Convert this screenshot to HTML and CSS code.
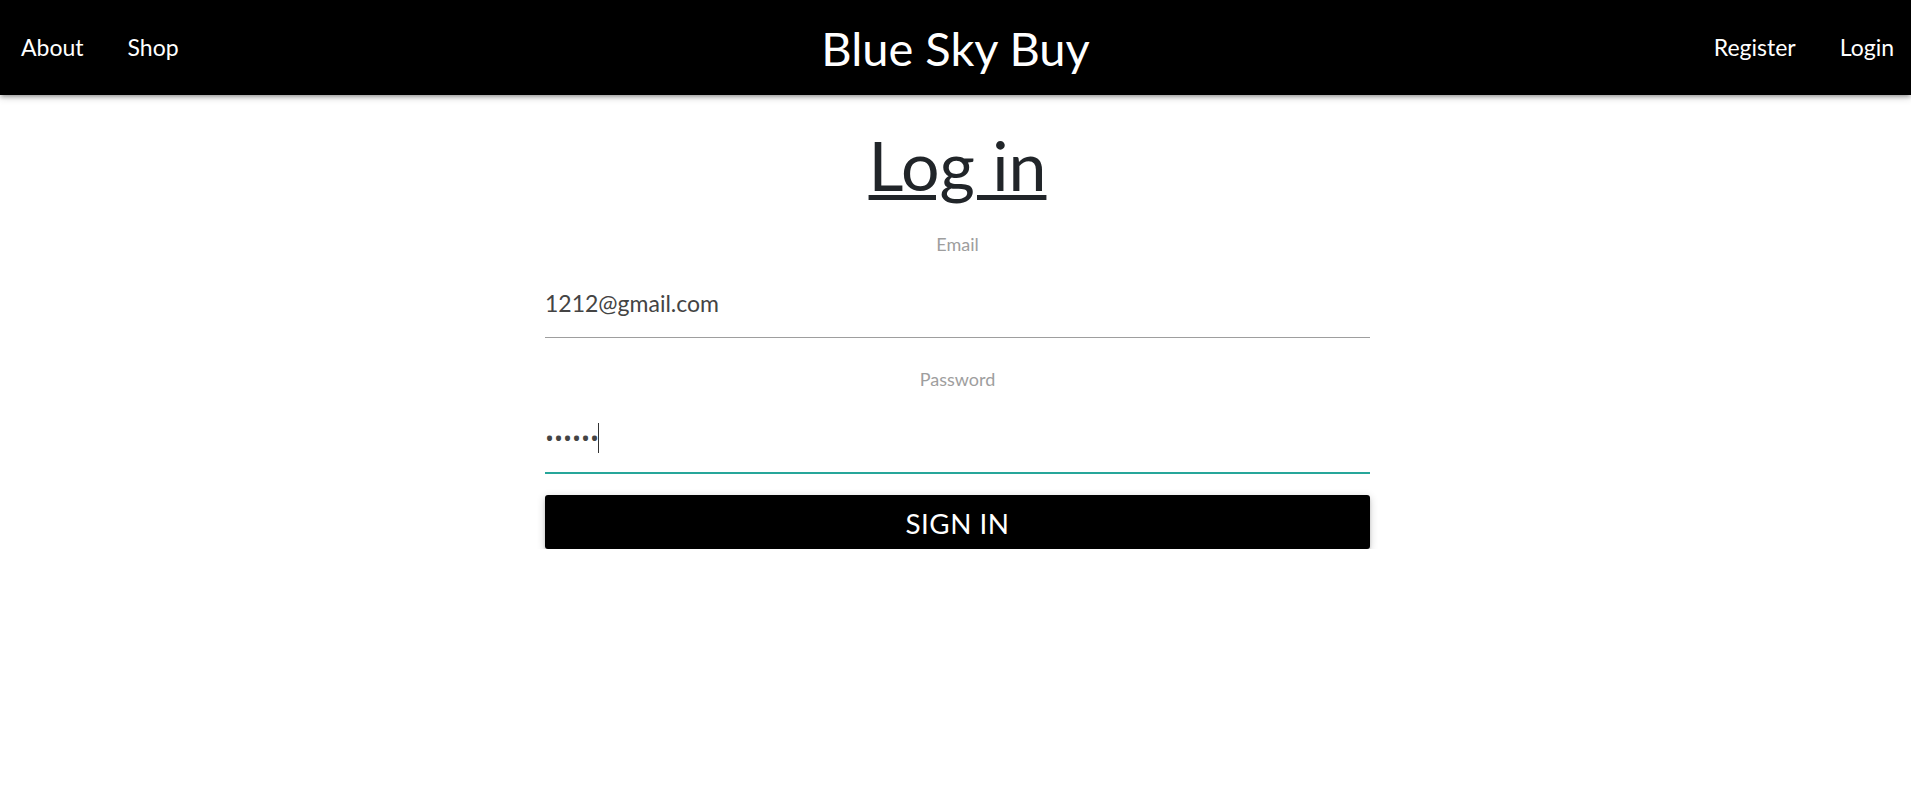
FILE: index.html
```html
<!DOCTYPE html>
<html lang="en">
<head>
<meta charset="utf-8">
<title>Blue Sky Buy - Log in</title>
<link rel="stylesheet" href="styles.css">
</head>
<body>
<nav class="topnav">
  <ul class="nav-links nav-left">
    <li><a href="#">About</a></li>
    <li><a href="#">Shop</a></li>
  </ul>
  <a class="brand" href="#">Blue Sky Buy</a>
  <ul class="nav-links nav-right">
    <li><a href="#">Register</a></li>
    <li><a href="#">Login</a></li>
  </ul>
</nav>
<main class="page">
  <h1 class="title"><a href="#">Log in</a></h1>
  <form class="login-form">
    <div class="field">
      <label class="field-label" for="email">Email</label>
      <input class="field-input" id="email" type="email" value="1212@gmail.com">
    </div>
    <div class="field field-second">
      <label class="field-label" for="password">Password</label>
      <div class="input-wrap">
        <input class="field-input field-password is-focused" id="password" type="password" value="123456">
        <span class="caret"></span>
      </div>
    </div>
    <button class="btn" type="button">Sign in</button>
  </form>
</main>
</body>
</html>
```
FILE: styles.css
```css
html, body {
  margin: 0;
  padding: 0;
  background: #fff;
}

body {
  font-family: Lato, "Open Sans", "Liberation Sans", sans-serif;
}

.topnav {
  display: grid;
  grid-template-columns: 1fr auto 1fr;
  align-items: center;
  height: 95px;
  background: #000;
  color: #fff;
  box-shadow: 0 3px 3px 0 rgba(0,0,0,0.14), 0 4px 2px -3px rgba(0,0,0,0.12), 0 2px 8px 0 rgba(0,0,0,0.2);
  position: relative;
  z-index: 2;
}

.nav-links {
  display: flex;
  list-style: none;
  margin: 0;
  padding: 0;
}

.nav-left {
  justify-self: start;
  margin-left: -1px;
}

.nav-right {
  justify-self: end;
  margin-right: -5px;
}

.nav-links a {
  display: block;
  padding: 0 22px;
  line-height: 95px;
  font-size: 23px;
  color: #fff;
  text-decoration: none;
}

.brand {
  font-size: 47px;
  line-height: 94px;
  color: #fff;
  text-decoration: none;
  white-space: nowrap;
}

.page {
  width: 829px;
  margin: 0 auto;
  padding-left: 4px;
  box-sizing: border-box;
}

.title {
  margin: 30px 0 0;
  text-align: center;
  font-size: 68px;
  font-weight: 400;
  line-height: 80px;
}

.title a {
  color: #212529;
  text-decoration: underline;
  text-decoration-thickness: 5px;
  text-underline-offset: 4px;
}

.login-form {
  display: flex;
  flex-direction: column;
  margin-top: 27px;
}

.field {
  display: flex;
  flex-direction: column;
}

.field-second {
  margin-top: 29px;
}

.field-label {
  display: block;
  text-align: center;
  font-size: 18px;
  line-height: 24px;
  color: #9e9e9e;
  margin-bottom: 12px;
}

.field-second .field-label {
  margin-bottom: 12px;
}

.input-wrap {
  position: relative;
}

.field-input {
  display: block;
  width: 100%;
  box-sizing: content-box;
  height: 69px;
  padding: 0;
  margin: 0;
  border: none;
  border-bottom: 1px solid #9e9e9e;
  outline: none;
  background: transparent;
  font-family: inherit;
  font-size: 23px;
  color: #444;
}

.field-password {
  font-family: "Open Sans", sans-serif;
  font-size: 24px;
}

.field-input.is-focused {
  border-bottom: 1px solid #26a69a;
  box-shadow: 0 1px 0 0 #26a69a;
}

.caret {
  position: absolute;
  left: 53px;
  top: 20px;
  width: 1px;
  height: 30px;
  background: #333;
}

.btn {
  margin-top: 22px;
  height: 54px;
  width: 100%;
  border: none;
  border-radius: 3px;
  background: #000;
  color: #fff;
  font-family: inherit;
  font-size: 27.8px;
  line-height: 50px;
  padding: 4px 0 0;
  text-transform: uppercase;
  letter-spacing: 0.5px;
  cursor: pointer;
  box-shadow: 0 3px 3px 0 rgba(0,0,0,0.14), 0 4px 2px -3px rgba(0,0,0,0.12), 0 2px 8px 0 rgba(0,0,0,0.2);
}
```
